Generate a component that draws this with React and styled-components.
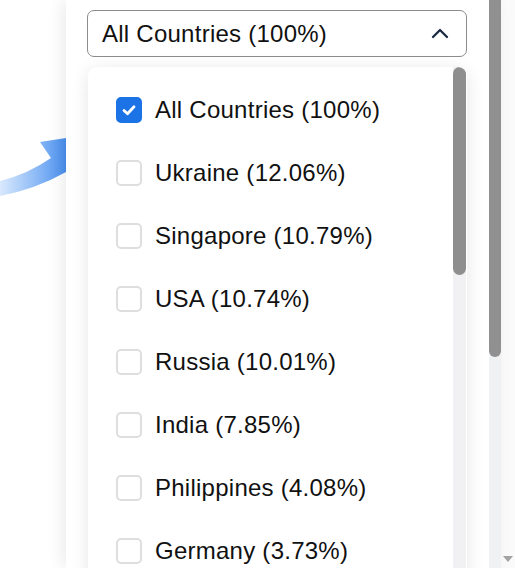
import styled, { createGlobalStyle } from "styled-components"

const countries = [
    { name: "All Countries", share: "100%", checked: true },
    { name: "Ukraine", share: "12.06%" },
    { name: "Singapore", share: "10.79%" },
    { name: "USA", share: "10.74%" },
    { name: "Russia", share: "10.01%" },
    { name: "India", share: "7.85%" },
    { name: "Philippines", share: "4.08%" },
    { name: "Germany", share: "3.73%" },
]

const GlobalStyle = createGlobalStyle`
body {
    margin: 0;
    overflow: hidden;
    background: #fff;
    font-family: "Liberation Sans", Arial, sans-serif;
}
`

const App = () => {
    return (
        <>
            <GlobalStyle />
            <Page>
                <Backdrop>
                    <svg width="66" height="568" viewBox="0 0 66 568">
                        <defs>
                            <linearGradient id="arrowFill" x1="0" y1="0" x2="1" y2="0">
                                <stop offset="0" stopColor="#d9e9fd" />
                                <stop offset="0.55" stopColor="#8dbaf6" />
                                <stop offset="1" stopColor="#4a90ef" />
                            </linearGradient>
                        </defs>
                        <path
                            d="M0 181 Q28 174 51 158 L40 142 L66 138 L66 172 Q36 189 0 196 Z"
                            fill="url(#arrowFill)"
                        />
                    </svg>
                </Backdrop>
                <Panel>
                    <PanelBody>
                        <Select>
                            <span>All Countries (100%)</span>
                            <svg width="18" height="12" viewBox="0 0 18 12">
                                <polyline
                                    points="2,10 9,3 16,10"
                                    fill="none"
                                    stroke="#1c2b44"
                                    strokeWidth="2.3"
                                    strokeLinecap="round"
                                    strokeLinejoin="round"
                                />
                            </svg>
                        </Select>
                        <Menu>
                            <OptionList>
                                {countries.map((item, index) => (
                                    <Option key={index}>
                                        <Box $checked={item.checked}>
                                            {item.checked && (
                                                <svg width="18" height="18" viewBox="0 0 18 18">
                                                    <polyline
                                                        points="4,9.5 7.5,12.8 14,5.8"
                                                        fill="none"
                                                        stroke="#fff"
                                                        strokeWidth="2.8"
                                                        strokeLinecap="round"
                                                        strokeLinejoin="round"
                                                    />
                                                </svg>
                                            )}
                                        </Box>
                                        <OptionLabel>{item.name} ({item.share})</OptionLabel>
                                    </Option>
                                ))}
                            </OptionList>
                            <MenuTrack>
                                <Thumb $height={208} $color="#8e8e8e" />
                            </MenuTrack>
                        </Menu>
                    </PanelBody>
                    <PanelTrack>
                        <Thumb $height={357} $color="#909090" $flatTop />
                    </PanelTrack>
                </Panel>
                <WindowTrack>
                    <svg width="10" height="6" viewBox="0 0 10 6">
                        <polygon points="0,0 10,0 5,6" fill="#a3a3a3" />
                    </svg>
                </WindowTrack>
            </Page>
        </>
    )
}

export default App

const Page = styled.div`
display: flex;
height: 100vh;
overflow: hidden;
`
const Backdrop = styled.div`
width: 66px;
flex-shrink: 0;
svg{
    display: block;
}
`
const Panel = styled.div`
position: relative;
display: flex;
flex: 1;
background: #fff;
box-shadow: -5px 0 14px rgba(0, 0, 0, 0.07);
`
const PanelBody = styled.div`
flex: 1;
padding: 10px 22px 0 21px;
`
const Select = styled.div`
display: flex;
align-items: center;
justify-content: space-between;
box-sizing: border-box;
height: 47px;
padding: 0 17px 0 14px;
border: 1px solid #8c8c8c;
border-radius: 7px;
font-size: 24px;
letter-spacing: 0.25px;
color: #111;
svg{
    margin-top: -2px;
}
`
const Menu = styled.div`
display: flex;
margin-top: 10px;
margin-left: 1px;
height: 620px;
background: #fff;
border-radius: 9px;
overflow: hidden;
box-shadow: 0 3px 18px rgba(0, 0, 0, 0.1);
`
const OptionList = styled.div`
flex: 1;
padding: 11px 0 0 28px;
`
const Option = styled.div`
display: flex;
align-items: center;
height: 63px;
`
const Box = styled.span`
display: flex;
align-items: center;
justify-content: center;
box-sizing: border-box;
width: 26px;
height: 26px;
margin-right: 13px;
border-radius: 5px;
border: 2px solid ${(p) => (p.$checked ? "#1b73e6" : "#dedede")};
background: ${(p) => (p.$checked ? "#1b73e6" : "#fff")};
`
const OptionLabel = styled.span`
font-size: 24px;
letter-spacing: 0.25px;
color: #111;
`
const MenuTrack = styled.div`
width: 13px;
margin-right: 1px;
background: #f1f1f3;
`
const PanelTrack = styled.div`
width: 12px;
background: #f0f1f3;
`
const Thumb = styled.div`
height: ${(p) => p.$height}px;
background: ${(p) => p.$color};
border-radius: ${(p) => (p.$flatTop ? "0 0 6px 6px" : "7px")};
`
const WindowTrack = styled.div`
display: flex;
align-items: flex-end;
justify-content: center;
width: 14px;
padding-bottom: 6px;
box-sizing: border-box;
background: #fafafa;
`
